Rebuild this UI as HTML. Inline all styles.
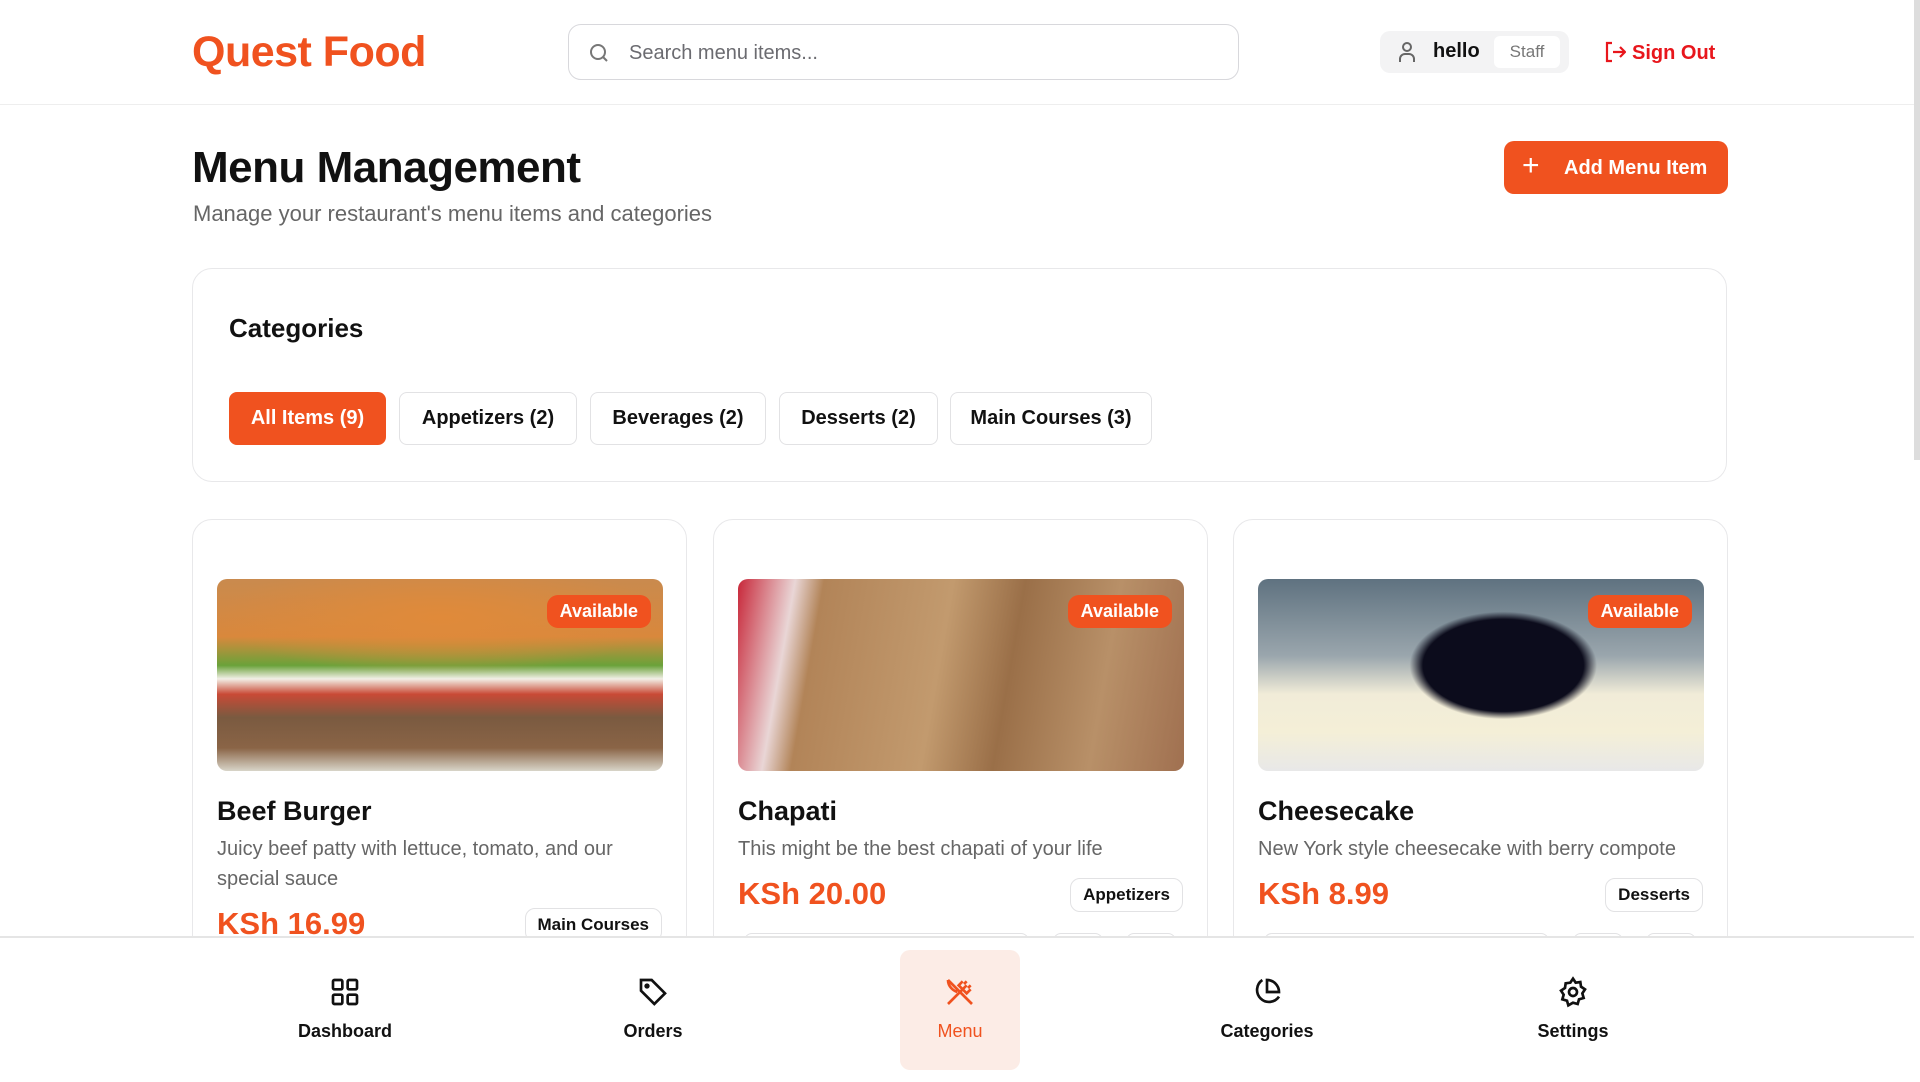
<!DOCTYPE html>
<html><head><meta charset="utf-8"><style>
*{box-sizing:border-box;margin:0;padding:0}
body{width:1920px;height:1080px;overflow:hidden;background:#fff;font-family:"Liberation Sans",sans-serif;color:#111;position:relative}
.abs{position:absolute}
.hdr{left:0;top:0;width:1914px;height:105px;border-bottom:1px solid #eee}
.logo{left:192px;top:28px;font-size:43px;font-weight:bold;color:#f0521f;letter-spacing:-0.5px}
.search{left:568px;top:24px;width:671px;height:56px;border:1.5px solid #d8d8dc;border-radius:13px}
.search span{position:absolute;left:60px;top:17px;font-size:20px;color:#6b6b70}
.pill{left:1380px;top:31px;width:189px;height:42px;background:#f3f3f4;border-radius:10px}
.scroll{left:1914px;top:0;width:6px;height:460px;background:#ddd}
h1{left:192px;top:143px;font-size:44px;font-weight:bold;letter-spacing:-0.5px}
.sub{left:193px;top:201px;font-size:22px;color:#666}
.add{left:1504px;top:141px;width:224px;height:53px;background:#f0521f;border-radius:10px;color:#fff;font-size:20px;font-weight:bold}
.cat{left:192px;top:268px;width:1535px;height:214px;border:1.5px solid #e8e8ea;border-radius:20px}
.chip{position:absolute;top:123px;height:53px;border:1.5px solid #e2e2e4;border-radius:8px;font-size:20px;font-weight:bold;display:flex;align-items:center;justify-content:center;color:#111}
.card{top:519px;width:495px;height:460px;border:1.5px solid #e8e8ea;border-radius:20px;overflow:hidden}
.img{position:absolute;left:24px;top:59px;width:446px;height:192px;border-radius:10px;overflow:hidden}
.badge{position:absolute;right:12px;top:16px;background:#f0521f;color:#fff;font-size:18px;font-weight:bold;padding:6px 13px;border-radius:11px}
.t{position:absolute;left:24px;top:276px;font-size:27px;font-weight:bold}
.d{position:absolute;left:24px;top:314px;width:440px;font-size:20px;line-height:30px;color:#666}
.p{position:absolute;left:24px;font-size:31px;font-weight:bold;color:#f0521f}
.tag{position:absolute;right:24px;border:1.5px solid #e2e2e4;border-radius:10px;font-size:17px;font-weight:bold;padding:6px 12px}
.sk{position:absolute;top:413px;height:40px;border:1.5px solid #e2e2e4;border-radius:8px}
.nav{left:0;top:936px;width:1914px;height:144px;background:#fff;border-top:2px solid #e5e5e5}
.ni{position:absolute;top:0;width:120px;height:144px;text-align:center}
.ni svg{position:absolute;left:44px;top:38px}
.ni div{position:absolute;left:0;right:0;top:83px;font-size:18px;font-weight:bold}
</style></head><body>
<div class="abs hdr"></div>
<div class="abs logo">Quest Food</div>
<div class="abs search"><svg style="position:absolute;left:18px;top:16px" width="24" height="24" viewBox="0 0 24 24" fill="none" stroke="#777" stroke-width="2"><circle cx="11" cy="11" r="7"/><path d="M20 20l-4-4"/></svg><span>Search menu items...</span></div>
<div class="abs pill">
<svg style="position:absolute;left:16px;top:9px" width="22" height="24" viewBox="0 0 22 24" fill="none" stroke="#666" stroke-width="2"><circle cx="11" cy="7" r="4"/><path d="M4 22v-3a5 5 0 0 1 5-5h4a5 5 0 0 1 5 5v3"/></svg>
<span style="position:absolute;left:53px;top:9px;font-size:20px;font-weight:bold">hello</span>
<span style="position:absolute;left:114px;top:5px;width:66px;height:32px;background:#fff;border-radius:6px;font-size:17px;color:#777;text-align:center;line-height:32px">Staff</span></div>
<div class="abs" style="left:1604px;top:40px;color:#e8161c;font-size:20px;font-weight:bold"><svg width="22" height="24" viewBox="0 0 22 24" fill="none" stroke="#e8161c" stroke-width="2.2" style="vertical-align:-5px;margin-right:6px"><path d="M8 3H3v18h5M9 12h11M16 7l5 5-5 5"/></svg>Sign Out</div>
<div class="abs scroll"></div>
<h1 class="abs">Menu Management</h1>
<div class="abs sub">Manage your restaurant's menu items and categories</div>
<div class="abs add"><span style="position:absolute;left:18px;top:8px;font-size:30px;font-weight:normal">+</span><span style="position:absolute;left:60px;top:16px">Add Menu Item</span></div>
<div class="abs cat">
<div style="position:absolute;left:36px;top:44px;font-size:26px;font-weight:bold">Categories</div>
<div class="chip" style="left:36px;width:157px;background:#f0521f;border-color:#f0521f;color:#fff">All Items (9)</div>
<div class="chip" style="left:206px;width:178px">Appetizers (2)</div>
<div class="chip" style="left:397px;width:176px">Beverages (2)</div>
<div class="chip" style="left:586px;width:159px">Desserts (2)</div>
<div class="chip" style="left:757px;width:202px">Main Courses (3)</div>
</div>

<div class="abs card" style="left:192px">
<div class="img" style="background:radial-gradient(ellipse 50% 30% at 50% 20%,#e08a3a,transparent),linear-gradient(180deg,#c98a4e 0%,#d9883c 30%,#6aa23a 45%,#f2efe6 52%,#c94a36 60%,#7a5a40 72%,#8a6446 88%,#d8d4c8 100%)"><div class="badge">Available</div></div>
<div class="t">Beef Burger</div>
<div class="d">Juicy beef patty with lettuce, tomato, and our special sauce</div>
<div class="p" style="top:386px">KSh 16.99</div>
<div class="tag" style="top:388px">Main Courses</div>
</div>
<div class="abs card" style="left:713px">
<div class="img" style="background:linear-gradient(100deg,#c8283a 0%,#e9d6d6 12%,#b28458 18%,#c29a6e 45%,#9a6f48 60%,#b89068 80%,#a07050 100%)"><div class="badge">Available</div></div>
<div class="t">Chapati</div>
<div class="d">This might be the best chapati of your life</div>
<div class="p" style="top:356px">KSh 20.00</div>
<div class="tag" style="top:358px">Appetizers</div>
<div class="sk" style="left:30px;width:285px"></div><div class="sk" style="left:339px;width:50px"></div><div class="sk" style="left:412px;width:50px"></div>
</div>
<div class="abs card" style="left:1233px">
<div class="img" style="background:radial-gradient(ellipse 30% 40% at 55% 45%,#0c0c1c 60%,transparent 70%),linear-gradient(180deg,#5f7280 0%,#9aa6ad 40%,#f1ecd8 60%,#f4efd7 80%,#e8e8e8 100%)"><div class="badge">Available</div></div>
<div class="t">Cheesecake</div>
<div class="d">New York style cheesecake with berry compote</div>
<div class="p" style="top:356px">KSh 8.99</div>
<div class="tag" style="top:358px">Desserts</div>
<div class="sk" style="left:30px;width:285px"></div><div class="sk" style="left:339px;width:50px"></div><div class="sk" style="left:412px;width:50px"></div>
</div>

<div class="abs nav">
<div class="ni" style="left:285px"><svg width="32" height="32" viewBox="0 0 24 24" fill="none" stroke="#111" stroke-width="2"><rect x="3" y="3" width="7" height="7" rx="1"/><rect x="14" y="3" width="7" height="7" rx="1"/><rect x="3" y="14" width="7" height="7" rx="1"/><rect x="14" y="14" width="7" height="7" rx="1"/></svg><div>Dashboard</div></div>
<div class="ni" style="left:593px"><svg width="32" height="32" viewBox="0 0 24 24" fill="none" stroke="#111" stroke-width="2"><path d="M3 3h8l10 10-8 8L3 11z"/><circle cx="7.5" cy="7.5" r="1"/></svg><div>Orders</div></div>
<div class="ni" style="left:900px;background:#fcece6;border-radius:10px;top:12px;height:120px"><svg style="top:26px" width="32" height="32" viewBox="0 0 24 24" fill="none" stroke="#f0521f" stroke-width="2"><path d="M3 21L17 7M14 4l-3 3 6 6 3-3M17 4l-2 2M20 7l-2 2M3 3l18 18M3 3c0 5 4 8 7 9"/></svg><div style="top:71px;color:#f0521f;font-weight:normal">Menu</div></div>
<div class="ni" style="left:1207px"><svg width="32" height="32" viewBox="0 0 24 24" fill="none" stroke="#111" stroke-width="2"><path d="M21 15.5A9 9 0 1 1 8.5 3"/><path d="M21 12A9 9 0 0 0 12 3v9z"/></svg><div>Categories</div></div>
<div class="ni" style="left:1513px"><svg width="32" height="32" viewBox="0 0 24 24" fill="none" stroke="#111" stroke-width="2"><circle cx="12" cy="12" r="3"/><path d="M12 2l2 3 3.5-.5.5 3.5 3 2-2 3 1 3.5-3.5 1-1 3.5L12 20l-3.5 2-1-3.5L4 17.5l1-3.5-2-3 3-2L6.5 5.5 10 5z"/></svg><div>Settings</div></div>
</div>
</body></html>
